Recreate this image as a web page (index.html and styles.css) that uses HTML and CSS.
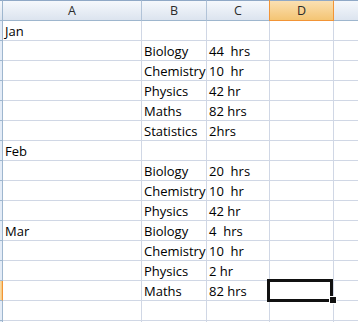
FILE: index.html
```html
<!DOCTYPE html>
<html>
<head>
<meta charset="utf-8">
<link rel="stylesheet" href="styles.css">
</head>
<body>
<div class="sheet">
  <div class="hd corner"></div>
  <div class="hd col">A</div>
  <div class="hd col">B</div>
  <div class="hd col">C</div>
  <div class="hd col active">D</div>
  <div class="hd col last"></div>

  <div class="rh"></div><div class="c">Jan</div><div class="c"></div><div class="c"></div><div class="c"></div><div class="c e"></div>
  <div class="rh"></div><div class="c"></div><div class="c">Biology</div><div class="c">44  hrs</div><div class="c"></div><div class="c e"></div>
  <div class="rh"></div><div class="c"></div><div class="c">Chemistry</div><div class="c">10  hr</div><div class="c"></div><div class="c e"></div>
  <div class="rh"></div><div class="c"></div><div class="c">Physics</div><div class="c">42 hr</div><div class="c"></div><div class="c e"></div>
  <div class="rh"></div><div class="c"></div><div class="c">Maths</div><div class="c">82 hrs</div><div class="c"></div><div class="c e"></div>
  <div class="rh"></div><div class="c"></div><div class="c">Statistics</div><div class="c">2hrs</div><div class="c"></div><div class="c e"></div>
  <div class="rh"></div><div class="c">Feb</div><div class="c"></div><div class="c"></div><div class="c"></div><div class="c e"></div>
  <div class="rh"></div><div class="c"></div><div class="c">Biology</div><div class="c">20  hrs</div><div class="c"></div><div class="c e"></div>
  <div class="rh"></div><div class="c"></div><div class="c">Chemistry</div><div class="c">10  hr</div><div class="c"></div><div class="c e"></div>
  <div class="rh"></div><div class="c"></div><div class="c">Physics</div><div class="c">42 hr</div><div class="c"></div><div class="c e"></div>
  <div class="rh"></div><div class="c">Mar</div><div class="c">Biology</div><div class="c">4  hrs</div><div class="c"></div><div class="c e"></div>
  <div class="rh"></div><div class="c"></div><div class="c">Chemistry</div><div class="c">10  hr</div><div class="c"></div><div class="c e"></div>
  <div class="rh"></div><div class="c"></div><div class="c">Physics</div><div class="c">2 hr</div><div class="c"></div><div class="c e"></div>
  <div class="rh active"></div><div class="c"></div><div class="c">Maths</div><div class="c">82 hrs</div><div class="c sel"><span class="selbox"></span><span class="handle"></span></div><div class="c e"></div>
  <div class="rh"></div><div class="c"></div><div class="c"></div><div class="c"></div><div class="c"></div><div class="c e"></div>
  <div class="rh"></div><div class="c"></div><div class="c"></div><div class="c"></div><div class="c"></div><div class="c e"></div>
</div>
</body>
</html>
```

FILE: styles.css
```css
html, body {
  margin: 0;
  padding: 0;
  background: #ffffff;
  overflow: hidden;
}

.sheet {
  display: grid;
  grid-template-columns: 3px 139px 65px 63px 64px 1fr;
  grid-template-rows: 21px;
  grid-auto-rows: 20px;
  width: 358px;
  height: 322px;
  overflow: hidden;
  font-family: "Open Sans", "Liberation Sans", sans-serif;
  color: #000;
}

.sheet > div {
  box-sizing: border-box;
}

.hd {
  border-top: 1px solid #8fa8c6;
  border-bottom: 1px solid #9eb6ce;
  border-right: 1px solid #b1c3d8;
  background: linear-gradient(#f5f8fc, #dce4ef);
  font-size: 12.5px;
  line-height: 19px;
  text-align: center;
  color: #2b2b2b;
}

.hd.corner {
  border-right: 1px solid #9eb6ce;
}

.hd.active {
  background: linear-gradient(#fbe0b2, #f4c574);
  border-bottom: 1px solid #f29436;
  border-right: 1px solid #f29436;
  box-shadow: -1px 0 0 #f29436;
}

.hd.last {
  border-right: none;
}

.rh {
  background: #e4ecf7;
  border-right: 1px solid #9eb6ce;
  border-bottom: 1px solid #9eb6ce;
}

.rh.active {
  background: linear-gradient(90deg, #fbe0b2, #f4c574);
  border-right: 1px solid #f29436;
}

.c {
  position: relative;
  border-right: 1px solid #d0d7e5;
  border-bottom: 1px solid #d0d7e5;
  padding: 2px 0 0 2px;
  font-size: 13px;
  line-height: 17px;
  white-space: pre;
  overflow: visible;
}

.c.e {
  border-right: none;
}

.sel {
  z-index: 2;
}

.selbox {
  position: absolute;
  left: -3px;
  top: -2px;
  width: 66px;
  height: 23px;
  box-sizing: border-box;
  border: 3px solid #111;
}

.handle {
  position: absolute;
  left: 60px;
  top: 16px;
  width: 6px;
  height: 6px;
  background: #111;
  box-shadow: 0 0 0 1px #fff;
}
```
